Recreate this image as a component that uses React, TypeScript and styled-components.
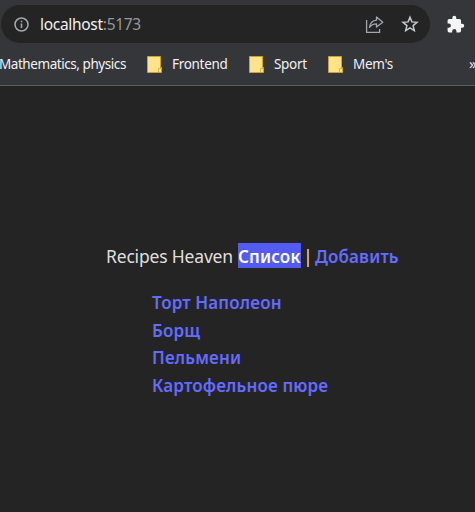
import React from "react";
import styled, { createGlobalStyle } from "styled-components";

const GlobalStyle = createGlobalStyle`
  * { box-sizing: border-box; }
  body { margin: 0; background: #242424; overflow: hidden; }
`;

const Window = styled.div`
  display: flex;
  flex-direction: column;
  width: 475px;
  height: 512px;
  overflow: hidden;
  background: #242424;
  font-family: "Noto Sans", "Open Sans", sans-serif;
  white-space: nowrap;
`;

const Chrome = styled.header`
  height: 86px;
  flex: none;
  background: #35363a;
  border-bottom: 1px solid #5d5e62;
`;

const Toolbar = styled.div`
  display: flex;
  align-items: center;
  height: 43px;
  padding: 5px 0 0 1px;
`;

const AddressBar = styled.div`
  display: flex;
  align-items: center;
  width: 429px;
  height: 38px;
  padding: 0 11px 0 12px;
  border-radius: 19px;
  background: #242424;
`;

const Url = styled.span`
  flex: 1;
  margin-left: 11px;
  font-size: 15.5px;
  line-height: 22px;
  letter-spacing: -0.3px;
  color: #f1f1f2;
`;

const Port = styled.span`
  color: #94979b;
`;

const ShareIcon = styled.svg`
  margin-right: 17px;
`;

const PuzzleIcon = styled.svg`
  margin-left: 16px;
`;

const BookmarksBar = styled.nav`
  display: flex;
  align-items: center;
  height: 42px;
`;

const Bookmark = styled.div<{ $width: number; $spacing: number }>`
  display: flex;
  align-items: center;
  flex: none;
  width: ${(p) => p.$width}px;
  font-size: 13.5px;
  line-height: 20px;
  letter-spacing: ${(p) => p.$spacing}px;
  color: #f1f1f2;
`;

const FolderIcon = styled.svg`
  flex: none;
  margin-right: 10px;
`;

const ScrolledBookmark = styled(Bookmark)`
  margin-left: -1px;
`;

const OverflowMark = styled.span`
  font-size: 15px;
  line-height: 20px;
  margin-top: -3px;
  color: #e3e4e6;
`;

const Page = styled.main`
  flex: 1;
  padding-top: 157px;
  font-size: 18px;
  line-height: 27px;
  color: rgba(255, 255, 255, 0.87);
`;

const Menu = styled.div`
  display: flex;
  align-items: flex-start;
  height: 27px;
  padding-left: 106px;
`;

const Brand = styled.span`
  width: 132px;
  font-size: 17.5px;
  letter-spacing: -0.18px;
`;

const MenuLink = styled.a<{ $selected?: boolean }>`
  height: 25px;
  width: ${(p) => (p.$selected ? "63px" : "auto")};
  line-height: 27px;
  font-weight: 600;
  font-size: 17px;
  letter-spacing: 0.13px;
  color: ${(p) => (p.$selected ? "#ffffff" : "#646cff")};
  background: ${(p) => (p.$selected ? "#535bf2" : "transparent")};
`;

const Divider = styled.span`
  width: 14px;
  text-align: center;
`;

const RecipeList = styled.ul`
  list-style: none;
  margin: 19px 0 0;
  padding: 0 0 0 152px;
`;

const Recipe = styled.li`
  height: 27.6px;
  font-size: 17px;
  font-weight: 600;
  letter-spacing: 0.14px;
  color: #646cff;
`;

const Folder = () => (
  <FolderIcon width="15" height="17" viewBox="0 0 15 17">
    <path d="M.5 .5H13.5V11.5H14.5V16.5H.5Z" fill="#ffe38a" stroke="#c7a52c" />
    <path d="M11.5 16V12.5H14" fill="none" stroke="#d9b637" />
  </FolderIcon>
);

const recipes = ["Торт Наполеон", "Борщ", "Пельмени", "Картофельное пюре"];

export default function App() {
  return (
    <Window>
      <GlobalStyle />
      <Chrome>
        <Toolbar>
          <AddressBar>
            <svg width="16" height="16" viewBox="0 0 16 16" fill="none" stroke="#a2a5aa" strokeWidth="1.6">
              <circle cx="8.5" cy="8.5" r="6.5" />
              <path d="M8.5 7.5V12.1M8.5 4.7V6.3" />
            </svg>
            <Url>
              localhost<Port>:5173</Port>
            </Url>
            <ShareIcon width="20" height="18" viewBox="0 0 20 18" fill="none" stroke="#a2a5aa" strokeWidth="1.3">
              <path d="M2.6 5V17.3H15.6V14" />
              <path d="M5.5 12.5C6 8.5 8.5 5.5 12.5 5.2V2L18.8 7.2L12.5 12V8.8C9.2 8.8 7 10 5.5 12.5Z" strokeLinejoin="round" />
            </ShareIcon>
            <svg width="18" height="18" viewBox="0 0 18 18" fill="none" stroke="#c5c7ca" strokeWidth="1.5">
              <path d="M9 2.2L10.9 6.9L16 7.3L12.1 10.6L13.3 15.6L9 12.9L4.7 15.6L5.9 10.6L2 7.3L7.1 6.9Z" />
            </svg>
          </AddressBar>
          <PuzzleIcon width="19" height="19" viewBox="0 0 24 24" fill="#f5f5f6">
            <path d="M20.5 11H19V7a2 2 0 0 0-2-2h-4V3.5a2.5 2.5 0 0 0-5 0V5H4a2 2 0 0 0-2 2v3.8h1.5a2.7 2.7 0 0 1 0 5.4H2V20a2 2 0 0 0 2 2h3.8v-1.5a2.7 2.7 0 0 1 5.4 0V22H17a2 2 0 0 0 2-2v-4h1.5a2.5 2.5 0 0 0 0-5Z" />
          </PuzzleIcon>
        </Toolbar>
        <BookmarksBar>
          <ScrolledBookmark $width={148} $spacing={-0.44}>Mathematics, physics</ScrolledBookmark>
          <Bookmark $width={102} $spacing={-0.3}><Folder />Frontend</Bookmark>
          <Bookmark $width={79} $spacing={-0.3}><Folder />Sport</Bookmark>
          <Bookmark $width={141} $spacing={-0.3}><Folder />Mem's</Bookmark>
          <OverflowMark>»</OverflowMark>
        </BookmarksBar>
      </Chrome>
      <Page>
        <Menu>
          <Brand>Recipes Heaven</Brand>
          <MenuLink $selected>Список</MenuLink>
          <Divider>|</Divider>
          <MenuLink>Добавить</MenuLink>
        </Menu>
        <RecipeList>
          {recipes.map((name) => (
            <Recipe key={name}>{name}</Recipe>
          ))}
        </RecipeList>
      </Page>
    </Window>
  );
}
